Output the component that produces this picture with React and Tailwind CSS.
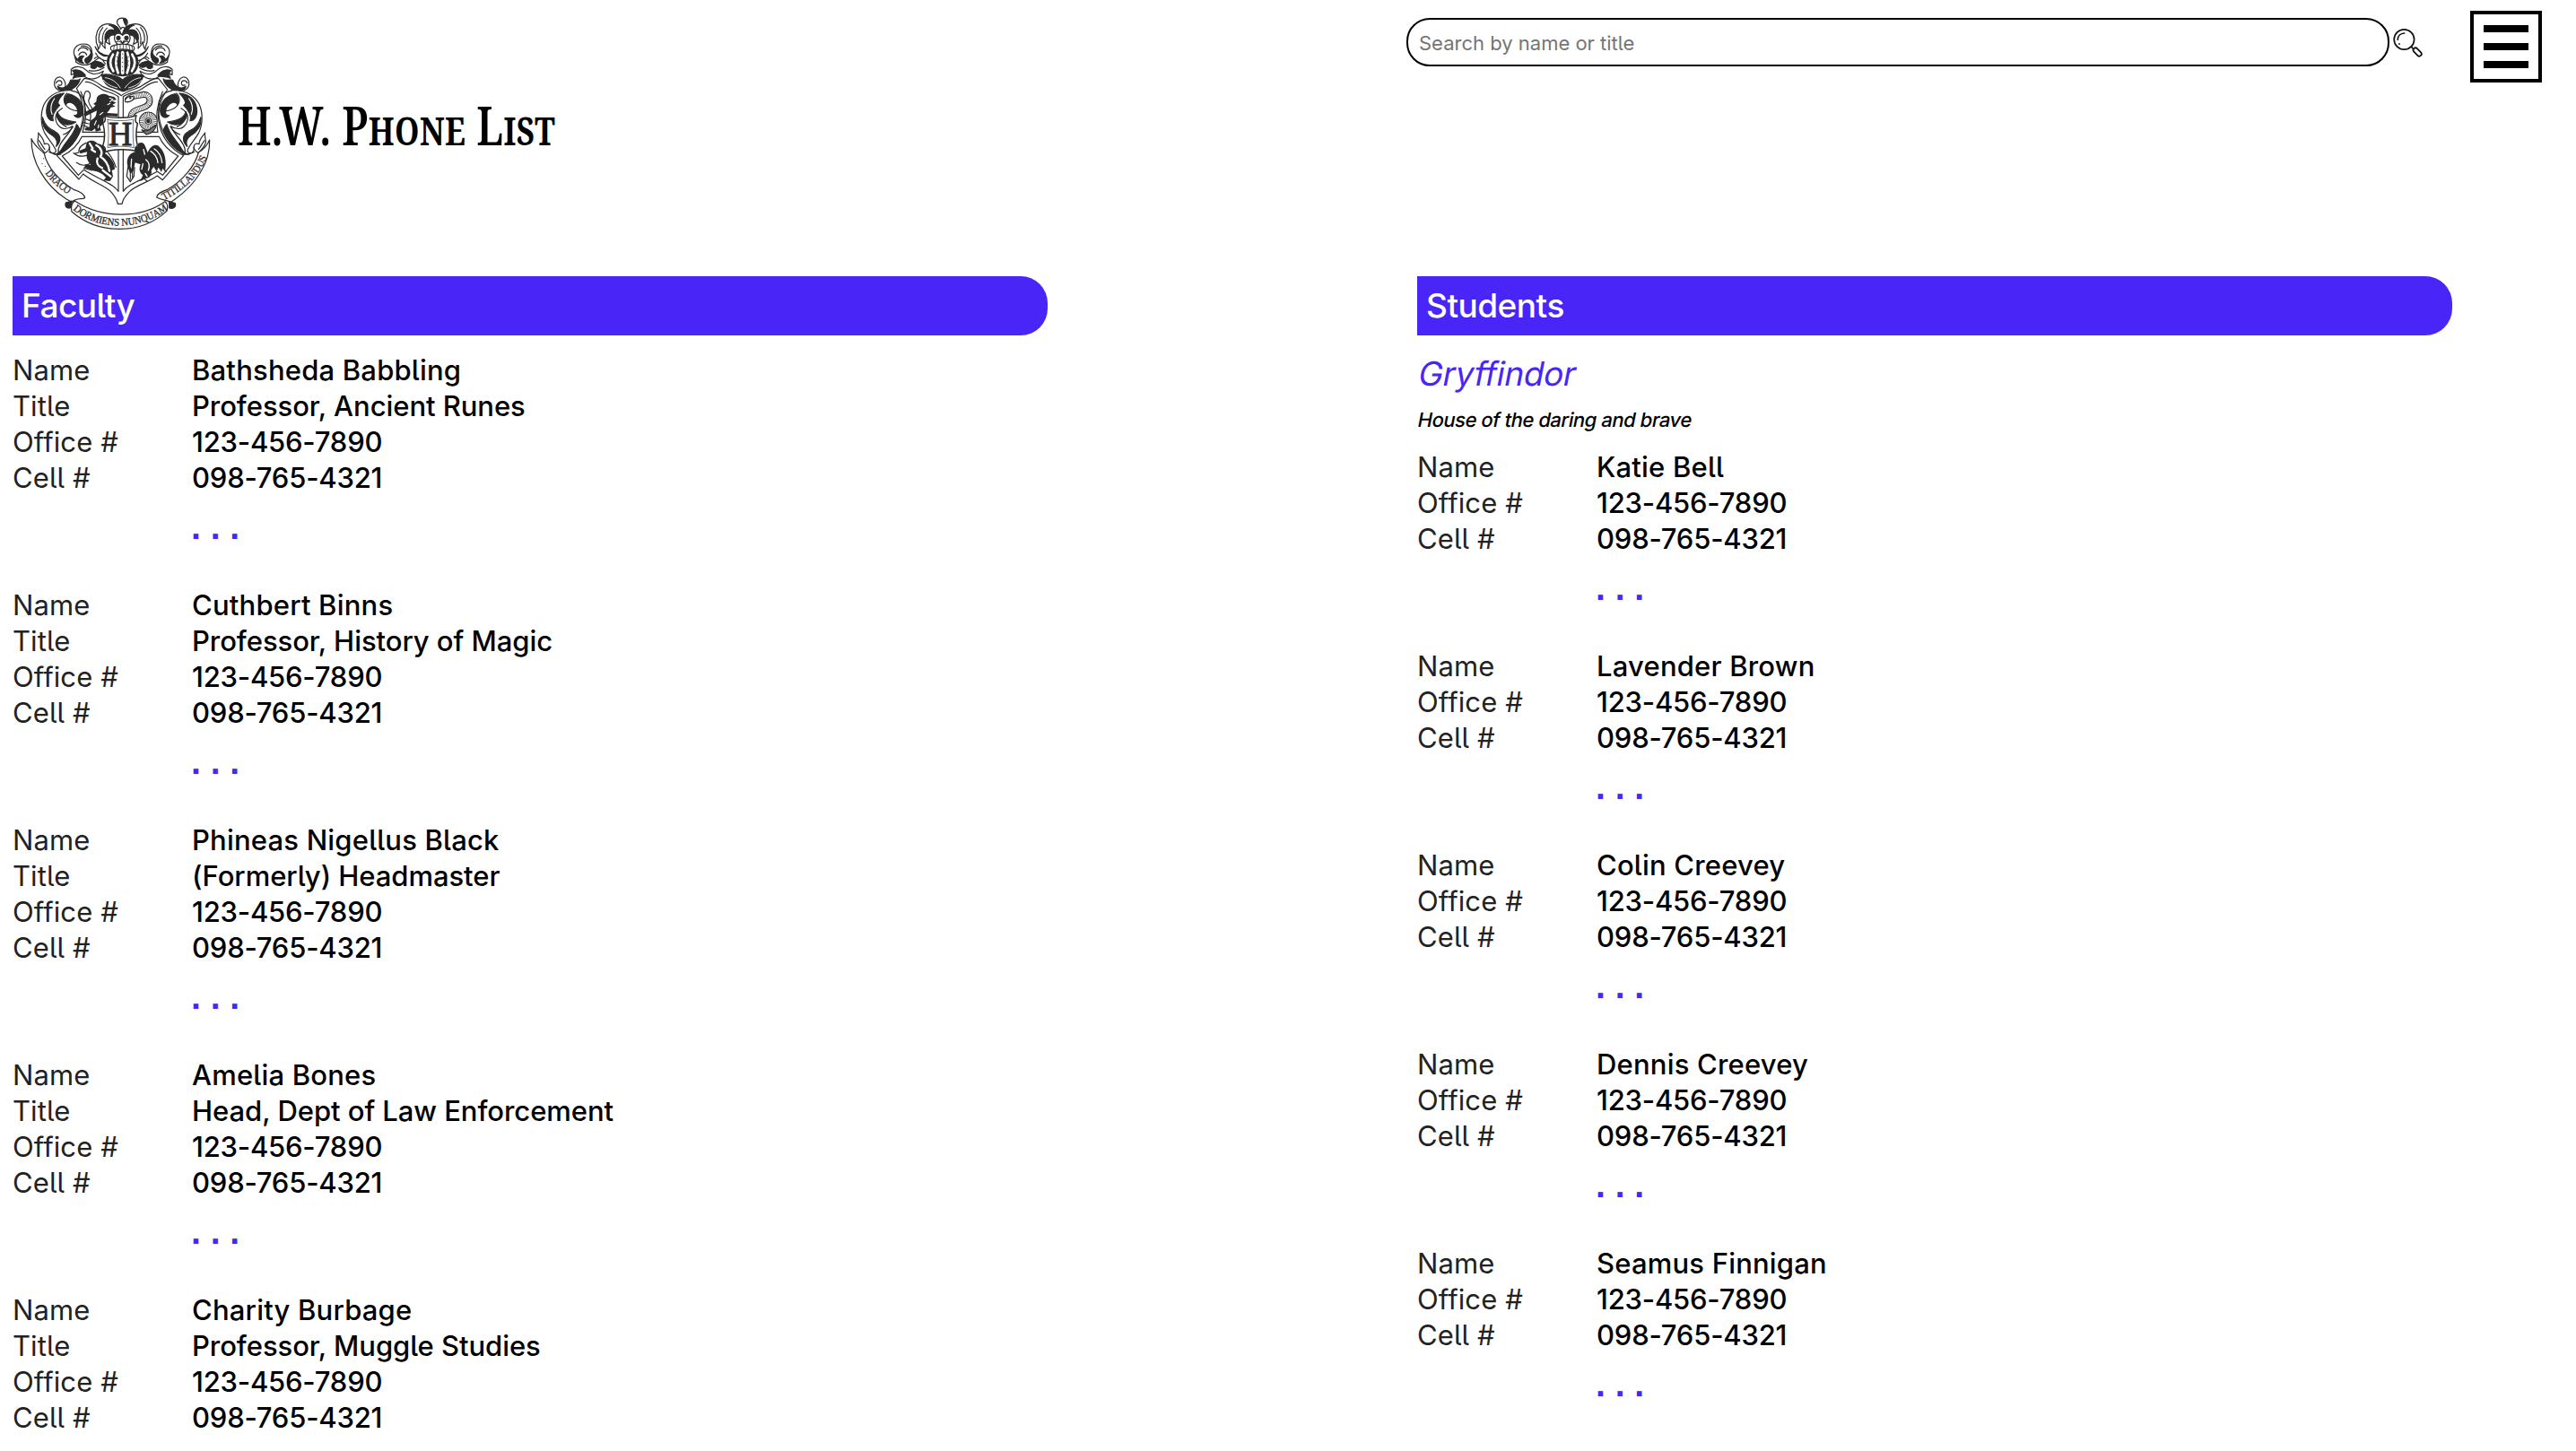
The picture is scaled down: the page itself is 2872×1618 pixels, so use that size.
const faculty = [
  ["Bathsheda Babbling", "Professor, Ancient Runes"],
  ["Cuthbert Binns", "Professor, History of Magic"],
  ["Phineas Nigellus Black", "(Formerly) Headmaster"],
  ["Amelia Bones", "Head, Dept of Law Enforcement"],
  ["Charity Burbage", "Professor, Muggle Studies"],
];

const students = [
  "Katie Bell",
  "Lavender Brown",
  "Colin Creevey",
  "Dennis Creevey",
  "Seamus Finnigan",
];

const OFFICE = "123-456-7890";
const CELL = "098-765-4321";

/* One side of the mantling; the other side is its mirror image. */
function Mantling() {
  return (
    <g>
      {/* plume */}
      <path d="M404 112C398 88 372 74 348 82C326 90 318 118 322 142C326 152 330 158 328 166C336 158 334 150 337 140C340 148 344 156 352 162C350 152 350 146 352 138C358 142 362 146 368 148C362 134 364 118 372 112" fill="#fff" />
      <path d="M404 116C398 92 384 80 364 84C376 88 384 96 384 102C370 96 358 100 352 116C350 124 350 132 354 140C362 122 372 114 386 118Z" fill="#2b2b2b" />
      <path d="M344 92C332 106 328 124 332 142M358 94C344 106 340 124 344 146" />
      {/* upper scroll */}
      <path d="M300 190C312 176 308 154 290 148C270 144 250 152 247 172C246 188 256 196 254 208C262 214 282 222 300 214C316 208 322 196 332 194" fill="#fff" />
      <path d="M262 170C266 156 288 156 294 168M264 184C270 170 286 172 290 184M304 172C300 158 284 152 272 154" />
      <path d="M250 186C252 200 264 210 280 212C272 206 270 196 280 188C270 184 262 190 262 200C256 196 252 192 250 186Z" fill="#2b2b2b" />
      <path d="M286 196C300 190 306 180 304 168C314 182 308 204 292 212C284 210 282 202 286 196Z" fill="#2b2b2b" />
      <path d="M318 156C326 174 342 184 362 186C350 192 330 184 318 156Z" fill="#2b2b2b" />
      <path d="M320 178C328 194 342 204 362 204M316 196C326 184 342 196 352 214" />
      <path d="M304 214C316 200 336 204 350 218C340 230 330 226 322 218C326 230 312 232 304 226Z" fill="#2b2b2b" />
      <path d="M238 232C252 218 276 222 290 236C304 250 326 252 346 238C336 266 300 270 282 256C268 246 252 244 238 250Z" fill="#fff" />
      <path d="M242 236C262 228 276 240 286 252C272 262 258 252 244 262C250 250 250 244 242 236Z" fill="#2b2b2b" />
      <path d="M298 236C316 240 334 236 348 226" />
      {/* lower scroll */}
      <path d="M214 298C224 286 218 264 202 258C188 256 180 270 182 284C184 298 198 306 214 304C236 302 246 288 262 276" fill="#fff" />
      <path d="M188 278C192 266 206 268 207 277C208 284 202 288 196 284" />
      <path d="M192 288C208 302 228 292 236 268C250 266 262 272 268 264C262 286 240 304 218 304C204 304 194 300 192 288Z" fill="#2b2b2b" />
      {/* side foliage */}
      <path d="M240 302C200 300 166 316 148 348C134 378 136 420 150 446C164 470 176 480 186 500C190 512 176 516 164 508" fill="#fff" />
      <path d="M214 312C180 314 160 334 156 362C152 392 166 404 178 404C172 384 184 368 200 352C190 348 192 334 214 312Z" fill="#2b2b2b" />
      <path d="M142 392C140 424 154 440 176 454C188 462 194 474 188 490C206 472 204 450 184 440C162 430 150 418 142 392Z" fill="#2b2b2b" />
      <path d="M208 362C184 376 180 398 194 418C206 434 226 434 242 422C236 446 214 458 200 486C190 506 196 518 204 516C176 520 162 508 166 492" />
      <path d="M192 374C200 396 220 404 254 408C240 418 214 424 198 404C190 394 188 384 192 374Z" fill="#2b2b2b" />
      <path d="M256 416C248 452 222 470 208 496C202 508 192 516 182 516C212 518 252 480 268 436C264 428 262 420 256 416Z" fill="#2b2b2b" />
      <path d="M228 314C264 322 284 350 276 382C270 396 256 396 248 386C262 388 264 376 256 358C246 342 226 336 220 350C214 338 216 322 228 314Z" fill="#2b2b2b" />
      <path d="M224 312C206 330 214 352 234 364C250 372 262 374 270 366M240 304C266 306 280 326 282 352C288 388 276 440 244 480C230 496 216 506 196 516" />
      <path d="M182 330C170 346 168 366 174 382" stroke="#fff" />
      <path d="M188 384C194 402 204 416 222 424M212 450C226 446 236 436 244 424" />
      {/* leaf tip beside the banner */}
      <path d="M150 512C140 498 124 486 126 472C128 456 130 448 128 444C138 458 148 466 148 482C164 474 172 494 158 506Z" fill="#fff" />
      <path d="M130 470C138 480 142 490 150 500" />
    </g>
  );
}

function Crest() {
  return (
    <svg viewBox="0 0 795 840" className="h-[280px] w-[265px] shrink-0" fill="none" stroke="#2b2b2b" strokeWidth="3.6" strokeLinecap="round" strokeLinejoin="round">
      {/* shield */}
      <path d="M282 262C304 262 322 274 344 290C366 300 388 304 406 320C424 304 448 300 470 290C494 274 510 262 530 262L560 300C536 330 522 380 534 420C544 462 572 500 614 520L544 602L526 588C496 610 458 618 434 640C418 656 410 668 408 682L394 682C392 668 384 656 370 640C344 618 312 610 278 582L264 600L190 520C232 500 264 462 272 420C284 380 276 330 256 296Z" fill="#fff" />
      <path d="M286 274C310 272 324 290 346 302C366 310 384 312 396 324L396 442L276 442C290 400 290 350 270 306M412 324C424 312 446 312 466 302C490 290 502 272 526 274M412 324L412 442L528 442C520 400 524 350 544 306M274 457L396 457L396 640C380 614 330 600 280 568L262 586L208 522C240 506 262 484 274 457ZM412 457L532 457C544 484 566 506 596 522L544 586L526 574C480 600 430 614 412 640Z" />

      {/* lion */}
      <path d="M324 326C334 312 350 312 364 320L382 324L390 334L374 336L388 344L376 350L386 356L370 360C368 368 360 374 358 378L394 380L392 390L352 388C342 396 350 406 344 416L334 424L338 436L320 440L318 430L308 438L284 436L284 428L300 424C296 410 302 402 314 396C324 388 322 376 324 370L288 388L280 384L282 376L310 362L320 352L312 348L322 340Z" fill="#2b2b2b" stroke="none" />
      <path d="M302 402C306 384 302 370 292 356C280 342 276 324 286 306C300 300 306 318 298 332C292 340 302 354 308 362M286 398L302 404M280 410L296 414M278 420L292 424" />
      <path d="M366 328L378 332L368 340M360 350L368 346M334 384L344 376M316 418L322 404M328 428L330 418" stroke="#fff" strokeWidth="3.4" />

      {/* serpent */}
      <path d="M428 332C444 318 464 322 480 316C504 316 508 344 488 356C468 366 442 366 438 388" strokeWidth="21" />
      <path d="M428 332C444 318 464 322 480 316C504 316 508 344 488 356C468 366 442 366 438 388" stroke="#fff" strokeWidth="14" />
      <path d="M446 324C464 320 468 320 480 316C504 316 508 344 488 356C468 366 442 366 438 388" strokeWidth="14" strokeDasharray="1.6 3.8" strokeLinecap="butt" />
      <path d="M418 336C422 326 434 318 448 324C450 334 436 342 420 341Z" fill="#fff" />
      <circle cx="436" cy="328" r="2" fill="#2b2b2b" />
      <circle cx="496" cy="405" r="20" strokeWidth="23" />
      <circle cx="496" cy="405" r="20" stroke="#fff" strokeWidth="17" />
      <circle cx="496" cy="405" r="20" strokeWidth="17" strokeDasharray="1.8 3" strokeLinecap="butt" />
      <path d="M522 418C520 436 506 446 490 450C484 446 478 440 474 434C486 440 500 438 506 428Z" fill="#777" />
      <circle cx="496" cy="405" r="5" fill="#2b2b2b" />

      {/* badger */}
      <path d="M290 476C304 466 318 470 326 480C344 482 356 498 352 514C370 526 384 544 384 566L374 570L378 590L368 606L346 604L354 594C344 580 330 574 316 572L282 560L286 550L304 552C292 540 286 522 292 508L268 514L266 504L286 496Z" fill="#2b2b2b" stroke="none" />
      <path d="M322 486C340 494 344 512 336 524C350 532 364 552 366 572M300 480L310 496M326 530C322 542 326 556 342 562M344 570L370 590M306 500L318 508" stroke="#fff" strokeWidth="7" />
      <path d="M288 478C270 486 262 498 264 510L248 514M290 520C270 526 256 520 246 512M300 548C282 556 266 552 256 544M308 570L280 562M352 500C366 514 380 536 388 560" />

      {/* raven */}
      <path d="M462 480C474 474 482 478 486 490L494 510C506 484 524 480 534 492C552 508 558 540 552 574L544 562L540 576L530 560L524 574L514 558L506 570C510 584 500 596 490 596L470 604L478 586C466 578 464 564 470 550L452 544L446 572L436 582L428 560C420 534 430 514 452 508L446 496L462 490Z" fill="#2b2b2b" stroke="none" />
      <path d="M488 534C498 542 502 556 496 570M478 548L474 566M504 506C518 514 526 528 528 544M516 498C532 508 540 524 542 544M480 500L484 516M440 532L438 562M486 580L492 590" stroke="#fff" strokeWidth="4" />
      <path d="M428 560L424 590L436 608L448 590L450 560M436 560L436 600M443 556L443 594M470 604L482 598L492 606M544 562L556 574" />

      <Mantling />
      <g transform="translate(814 0) scale(-1 1)">
        <Mantling />
      </g>

      {/* crest figure and helmet */}
      <path d="M392 70C396 58 420 56 426 70C430 80 420 86 418 98C416 88 406 90 404 98C402 86 388 82 392 70Z" fill="#fff" />
      <path d="M412 62C424 60 428 72 420 84C416 78 414 72 412 62Z" fill="#2b2b2b" />
      <path d="M384 118C388 106 398 106 410 116C420 106 432 106 434 118C438 132 432 146 420 150L398 150C386 146 380 132 384 118Z" fill="#fff" />
      <path d="M384 118C390 108 402 110 410 118C418 110 428 108 434 118M390 140C398 134 404 140 410 146C414 140 422 134 430 140" />
      <circle cx="396" cy="127" r="6" fill="#2b2b2b" />
      <circle cx="423" cy="127" r="6" fill="#2b2b2b" />
      <path d="M404 136L410 144L415 136" />
      <path d="M374 154C396 146 424 146 446 154C452 160 450 168 444 170C424 164 396 164 376 170C368 166 368 158 374 154Z" fill="#fff" />
      <path d="M382 154L380 166M392 151L391 164M402 150L402 163M412 150L412 163M422 150L423 163M432 152L434 165M441 154L444 167" strokeWidth="2.4" />
      <path d="M376 172C396 166 426 166 444 172C468 192 466 230 444 246C422 256 398 256 376 246C354 230 352 192 376 172Z" fill="#2b2b2b" />
      <path d="M378 182C366 200 366 218 379 238M394 176C386 198 386 222 395 244M426 176C434 198 434 222 425 244M442 182C454 200 454 218 441 238" stroke="#fff" strokeWidth="8" />
      <path d="M410 176L410 244" stroke="#fff" strokeWidth="11" />
      <path d="M410 180L410 242M391 190L391 230M429 190L429 230" strokeWidth="3" strokeDasharray="1 13" />
      <path d="M340 250C360 246 384 252 404 262L410 268L416 262C432 252 456 246 480 252C474 272 462 288 444 294L412 306L378 294C358 290 344 272 340 250Z" fill="#2b2b2b" />
      <path d="M352 260C374 262 392 276 402 294M470 260C450 262 430 276 418 294M346 268C360 284 376 290 392 294M474 268C462 284 446 290 430 294" stroke="#fff" strokeWidth="2.6" />

      {/* centre escutcheon */}
      <path d="M350 388C372 396 438 396 456 386C452 400 450 408 460 412C454 440 454 464 460 488C450 492 452 500 454 506C436 498 376 498 352 508C354 498 352 492 344 488C352 464 352 440 344 412C352 408 354 400 350 388Z" fill="#fff" strokeWidth="4.5" />
      <path d="M360 400C384 405 424 405 446 399C444 430 444 466 448 494C424 488 384 488 360 494C364 466 364 430 360 400Z" strokeWidth="2" />
      <text x="402" y="486" textAnchor="middle" fontFamily="Liberation Serif, serif" fontSize="112" fill="#2b2b2b" stroke="#2b2b2b" strokeWidth="2.5" textLength="80" lengthAdjust="spacingAndGlyphs">H</text>

      {/* banner */}
      <path d="M105 464C104 540 150 620 222 666L240 676C256 660 274 668 284 662C282 648 266 640 246 634C200 606 158 560 148 514C136 500 116 490 105 464Z" fill="#fff" />
      <path d="M701 468C704 548 650 620 586 666L572 676C552 668 536 668 524 660C526 646 544 640 560 634C610 606 652 556 664 510C680 500 692 490 701 468Z" fill="#fff" />
      <path d="M240 672L220 678C216 692 224 700 238 694Z" fill="#2b2b2b" />
      <path d="M566 674L586 680C590 692 580 700 566 696Z" fill="#2b2b2b" />
      <path d="M250 672C340 732 470 732 552 674C560 680 562 690 558 706C470 786 330 786 240 708C236 690 240 680 250 672Z" fill="#fff" />
      <path d="M146 530v1M141 547v1M151 556v1" strokeWidth="3" />
      <g fill="#2b2b2b" stroke="#2b2b2b" strokeWidth="0.9" fontFamily="Liberation Serif, serif" fontSize="35">
        <path id="banner-left" d="M151 580C172 608 200 634 238 656" fill="none" stroke="none" />
        <path id="banner-mid" d="M244 701C330 774 476 774 566 696" fill="none" stroke="none" />
        <path id="banner-right" d="M549 670C616 634 668 592 694 520" fill="none" stroke="none" />
        <text textLength="104" lengthAdjust="spacingAndGlyphs"><textPath href="#banner-left">DRACO</textPath></text>
        <text textLength="342" lengthAdjust="spacingAndGlyphs"><textPath href="#banner-mid">DORMIENS NUNQUAM</textPath></text>
        <text textLength="208" lengthAdjust="spacingAndGlyphs"><textPath href="#banner-right">TITILLANDUS</textPath></text>
      </g>
    </svg>
  );
}

function SearchIcon() {
  return (
    <svg viewBox="0 0 34 34" className="mt-[31px] ml-1 size-[34px] shrink-0" fill="none" stroke="#111" strokeLinecap="round">
      <circle cx="12.4" cy="13" r="11.2" strokeWidth="1.7" />
      <path d="M5.2 13.2C5.4 9 8.4 6.2 12.6 6" strokeWidth="1.7" />
      <circle cx="6.8" cy="18" r="0.5" strokeWidth="0.9" />
      <path d="M20.4 21.2L22 22.8" strokeWidth="1.7" />
      <rect x="21.6" y="24.4" width="11" height="5" rx="2.5" transform="rotate(46 27 27)" strokeWidth="1.8" />
    </svg>
  );
}

function SectionBar({ children }) {
  return (
    <h2 className="flex h-[66px] w-[1154px] items-center rounded-r-[30px] bg-[#4926f7] pl-[10px] text-[37px] font-[450] tracking-[-0.5px] text-white">
      {children}
    </h2>
  );
}

const valueClass = {
  Name: "font-[450] tracking-[0.2px]",
  Title: "font-[450] tracking-[-0.05px]",
  "Office #": "font-[450] tracking-[-0.2px]",
  "Cell #": "font-[450] tracking-[-0.2px]",
};

function Entry({ rows, more = true }) {
  return (
    <div className="mb-[26px]">
      <dl className="grid grid-cols-[200px_auto] text-[31px] leading-[40px] whitespace-nowrap">
        {rows.map(([label, value]) => (
          <div key={label} className="contents">
            <dt className="tracking-[0.1px] text-[#222]">{label}</dt>
            <dd className={valueClass[label]}>{value}</dd>
          </div>
        ))}
      </dl>
      {more && (
        <div className="ml-[199px] h-[76px] pt-[15px] font-['Liberation_Sans',sans-serif] text-[39px] leading-[40px] font-bold text-[#4926f7]">. . .</div>
      )}
    </div>
  );
}

export default function App() {
  return (
    <div className="h-[1618px] overflow-hidden bg-white font-['Inter',sans-serif] text-black [font-feature-settings:'cv05']">
      <header className="flex h-[308px] items-start">
        <Crest />
        <h1 className="mt-[102px] w-[1303px] font-['Noto_Serif',serif] text-[60px] leading-[74px] font-semibold whitespace-nowrap [font-variant-caps:small-caps]">
          <span className="inline-block origin-left scale-x-[0.775]">
            H.W. P<span className="text-[54px]">hone</span> L<span className="text-[54px]">ist</span>
          </span>
        </h1>
        <input
          placeholder="Search by name or title"
          className="mt-5 h-[54px] w-[1096px] shrink-0 rounded-[26px] border-2 border-black bg-white pt-[2px] pl-3 text-[22px] placeholder:text-[#757575]"
        />
        <SearchIcon />
        <button className="mt-3 ml-[52px] flex size-20 shrink-0 flex-col items-center gap-3 border-4 border-black pt-3">
          <span className="h-2 w-[50px] bg-black" />
          <span className="h-2 w-[50px] bg-black" />
          <span className="h-2 w-[50px] bg-black" />
        </button>
      </header>

      <main className="grid grid-cols-[1566px_1fr] pl-[14px]">
        <section>
          <SectionBar>Faculty</SectionBar>
          <div className="mt-[19px]">
            {faculty.map(([name, title], i) => (
              <Entry
                key={name}
                more={i < faculty.length - 1}
                rows={[["Name", name], ["Title", title], ["Office #", OFFICE], ["Cell #", CELL]]}
              />
            ))}
          </div>
        </section>
        <section>
          <SectionBar>Students</SectionBar>
          <h3 className="mt-[21px] pl-[2px] text-[37px] leading-[44px] font-normal tracking-[-0.4px] text-[#4926f7]">
            <span className="inline-block -skew-x-[11deg]">Gryffindor</span>
          </h3>
          <p className="mt-[15px] pl-[1px] text-[22px] leading-[28px] font-[450] tracking-[-0.45px]">
            <span className="inline-block -skew-x-[11deg]">House of the daring and brave</span>
          </p>
          <div className="mt-[19px]">
            {students.map((name) => (
              <Entry key={name} rows={[["Name", name], ["Office #", OFFICE], ["Cell #", CELL]]} />
            ))}
          </div>
        </section>
      </main>
    </div>
  );
}
